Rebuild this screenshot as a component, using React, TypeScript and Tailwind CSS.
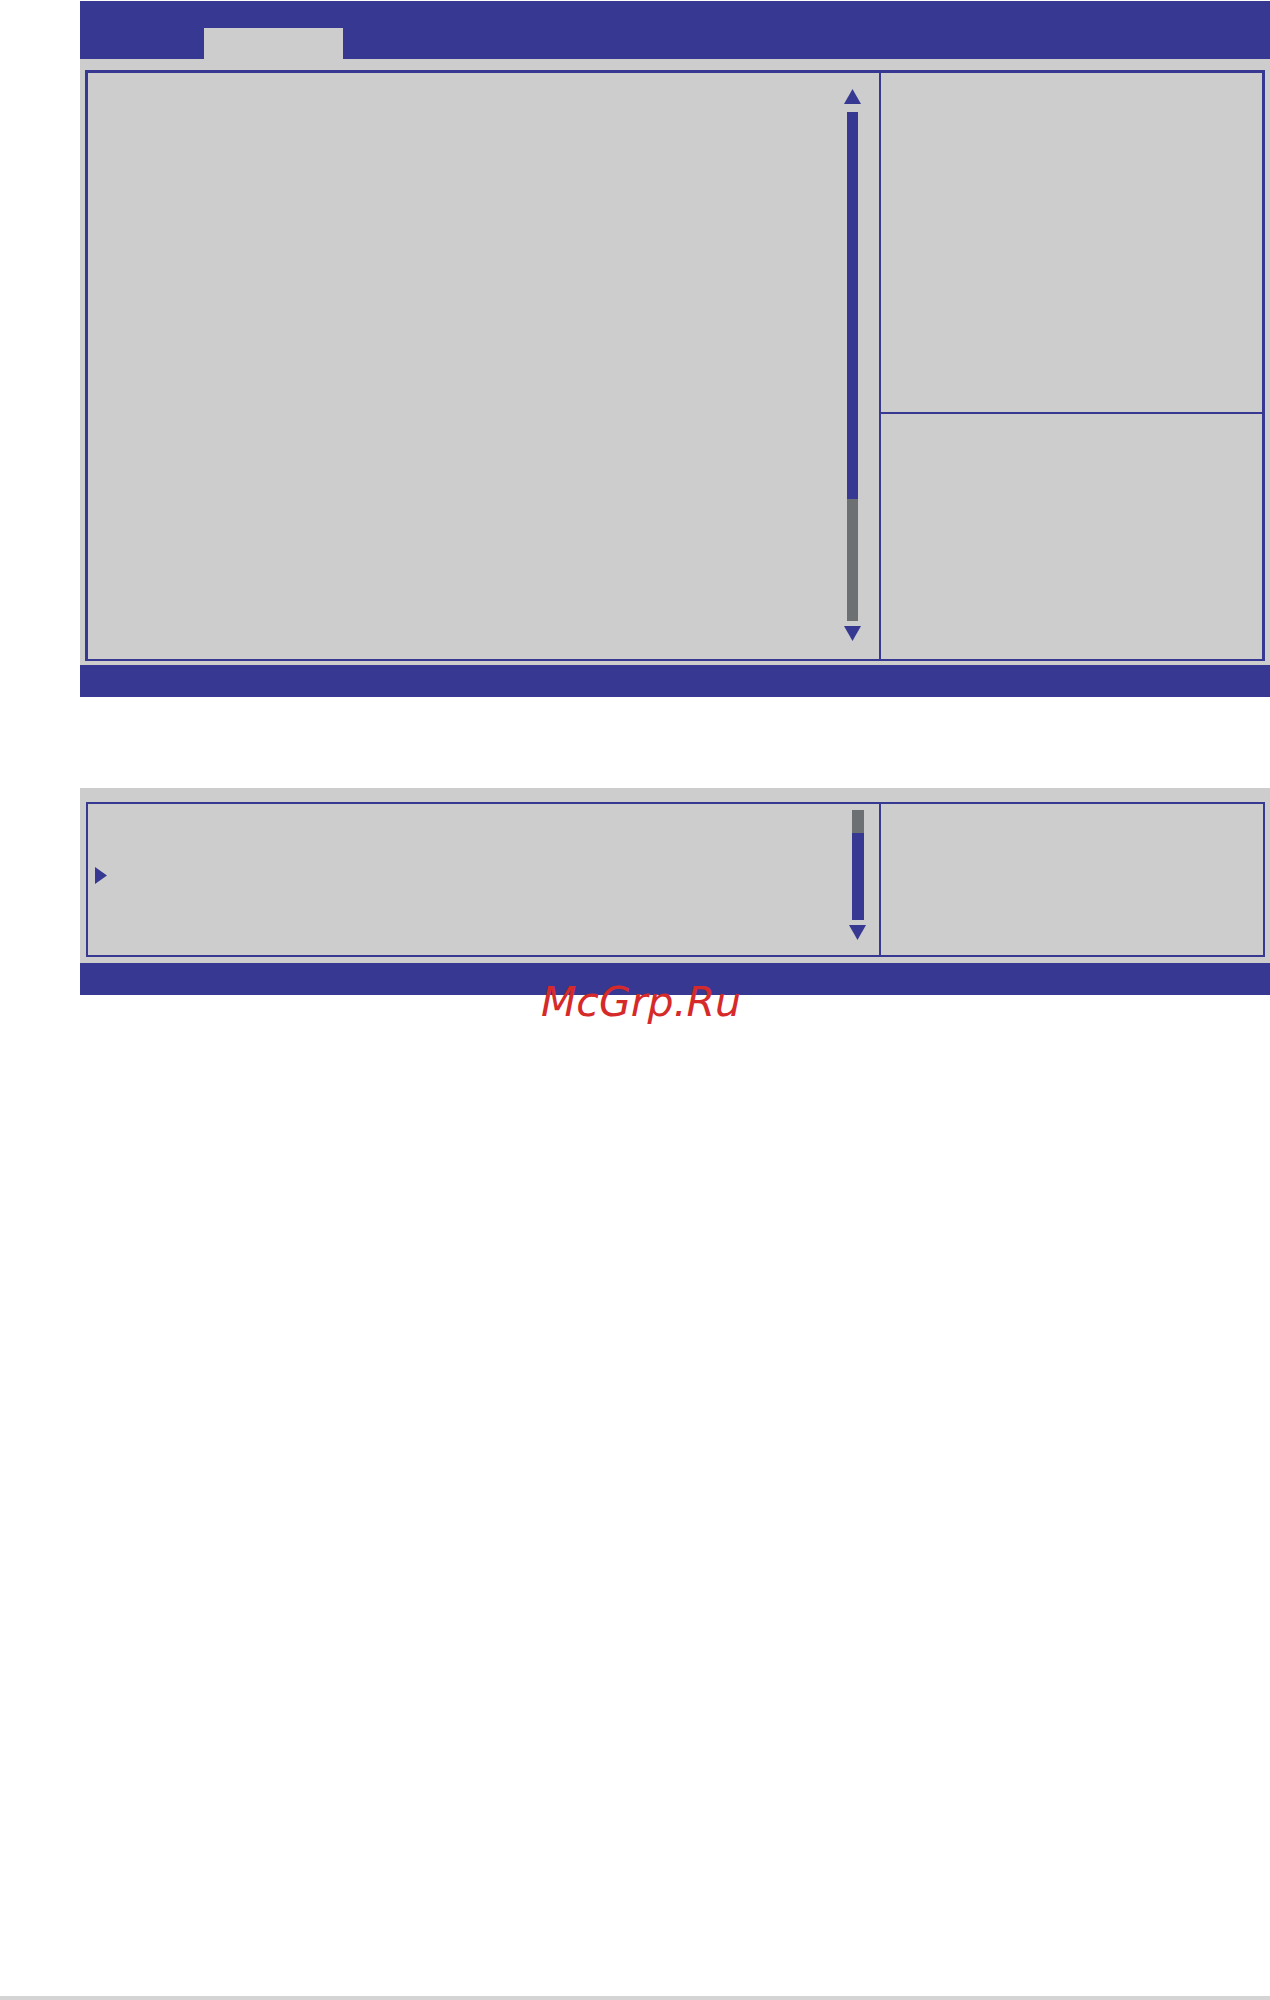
import React from 'react';

const BLUE = 'bg-[#373892]';

const TriUp = ({ className }: { className?: string }) => (
  <svg className={className} width="17" height="15" viewBox="0 0 17 15">
    <polygon points="8.5,0 17,15 0,15" fill="#373892" />
  </svg>
);

const TriDown = ({ className }: { className?: string }) => (
  <svg className={className} width="17" height="15" viewBox="0 0 17 15">
    <polygon points="0,0 17,0 8.5,15" fill="#373892" />
  </svg>
);

const TriRight = () => (
  <svg width="12" height="17" viewBox="0 0 12 17">
    <polygon points="0,0 12,8.5 0,17" fill="#373892" />
  </svg>
);

// Main setup screen: tab strip, item list with scrollbar, help pane
const MainScreen: React.FC = () => (
  <div className="ml-[80px] mt-[1px] w-[1190px] bg-[#cdcdcd]">
    <div className={`h-[58px] ${BLUE} flex items-end pl-[124px]`}>
      <div className="w-[139px] h-[31px] bg-[#cdcdcd]" />
    </div>
    <div className="pt-[11px] pb-[4px] pl-[5px] pr-[5px]">
      <div className="h-[591px] border-[3px] border-b-2 border-[#373892] flex">
        <div className="flex-1 flex justify-end pr-[18px]">
          <div className="flex flex-col items-center pt-[16px]">
            <TriUp />
            <div className="mt-[8px] w-[11px] flex flex-col">
              <div className="h-[387px] bg-[#373892]" />
              <div className="h-[122px] bg-[#6d7072]" />
            </div>
            <TriDown className="mt-[5px]" />
          </div>
        </div>
        <div className="w-[2px] bg-[#373892]" />
        <div className="w-[381px] flex flex-col">
          <div className="h-[339px]" />
          <div className="h-[2px] bg-[#373892]" />
          <div className="flex-1" />
        </div>
      </div>
    </div>
    <div className={`h-[32px] ${BLUE}`} />
  </div>
);

// Sub-menu screen: short list with one selected submenu entry
const SubScreen: React.FC = () => (
  <div className="ml-[80px] mt-[91px] w-[1190px] bg-[#cdcdcd]">
    <div className="pt-[14px] pb-[6px] pl-[6px] pr-[5px]">
      <div className="h-[155px] border-2 border-[#373892] flex">
        <div className="flex-1 flex">
          <div className="pl-[7px] pt-[63px]">
            <TriRight />
          </div>
          <div className="flex-1" />
          <div className="flex flex-col items-center pt-[6px] pr-[13px]">
            <div className="w-[12px] flex flex-col">
              <div className="h-[23px] bg-[#6d7072]" />
              <div className="h-[87px] bg-[#373892]" />
            </div>
            <TriDown className="mt-[5px]" />
          </div>
        </div>
        <div className="w-[2px] bg-[#373892]" />
        <div className="w-[382px]" />
      </div>
    </div>
    <div className={`h-[32px] ${BLUE}`} />
  </div>
);

export default function App() {
  return (
    <div className="relative w-[1270px] h-[2000px] bg-white flex flex-col">
      <MainScreen />
      <SubScreen />
      <div className="mt-auto h-[4px] bg-[#d4d4d4]" />
      <div
        className="absolute left-[541px] top-[978px] text-[41px] leading-[48px] italic text-[#d62a2a]"
        style={{ fontFamily: '"DejaVu Sans", sans-serif' }}
      >
        McGrp.Ru
      </div>
    </div>
  );
}
